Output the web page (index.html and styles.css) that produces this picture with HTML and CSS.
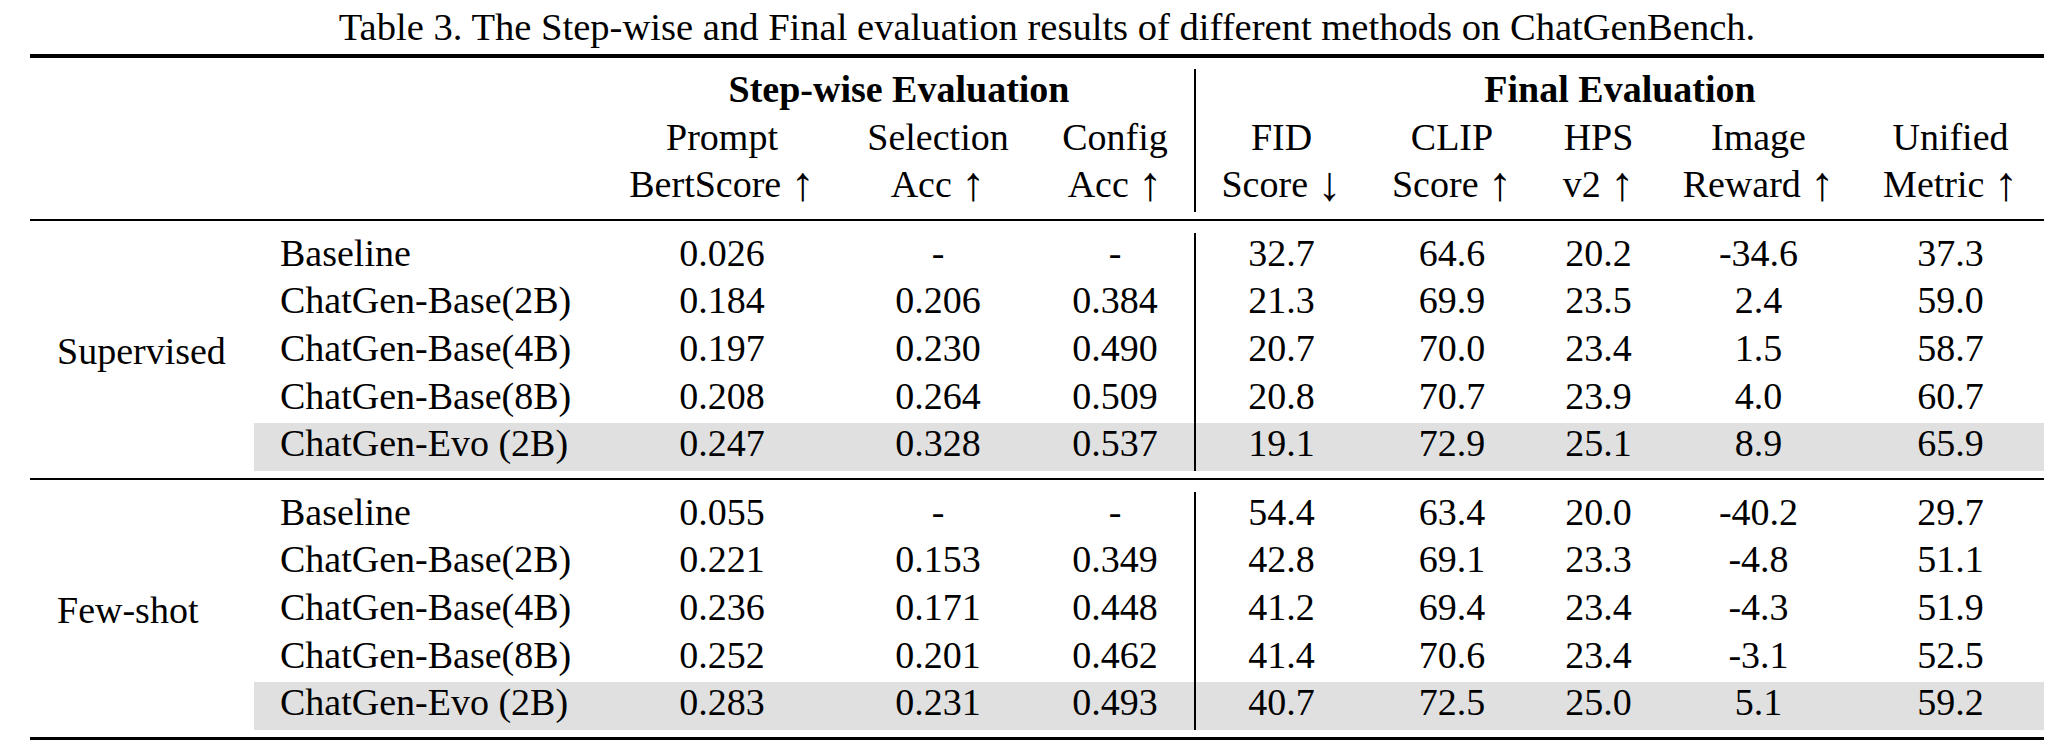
FILE: index.html
```html
<!DOCTYPE html>
<html>
<head>
<meta charset="utf-8">
<link rel="stylesheet" href="styles.css">
</head>
<body>
<div class="figure">
  <div class="caption">Table 3. The Step-wise and Final evaluation results of different methods on ChatGenBench.</div>
  <table class="results">
    <colgroup>
      <col class="c-group"><col class="c-method"><col class="c-prompt"><col class="c-sel"><col class="c-cfg">
      <col class="c-fid"><col class="c-clip"><col class="c-hps"><col class="c-ir"><col class="c-um">
    </colgroup>
    <tbody>
      <tr class="rule rule-top"><td colspan="10"><div class="line thick"></div></td></tr>
      <tr class="head">
        <td></td><td></td>
        <td colspan="3" class="bold">Step-wise Evaluation</td>
        <td colspan="5" class="bold vl">Final Evaluation</td>
      </tr>
      <tr class="head">
        <td></td><td></td>
        <td>Prompt</td><td>Selection</td><td>Config</td>
        <td class="vl">FID</td><td>CLIP</td><td>HPS</td><td>Image</td><td>Unified</td>
      </tr>
      <tr class="head">
        <td></td><td></td>
        <td>BertScore <span class="arr">↑</span></td><td>Acc <span class="arr">↑</span></td><td>Acc <span class="arr">↑</span></td>
        <td class="vl">Score <span class="arr">↓</span></td><td>Score <span class="arr">↑</span></td><td>v2 <span class="arr">↑</span></td><td>Reward <span class="arr">↑</span></td><td>Metric <span class="arr">↑</span></td>
      </tr>
      <tr class="rule rule-mid"><td colspan="10"><div class="line thin"></div></td></tr>

      <tr><td class="group" rowspan="5">Supervised</td><td class="method">Baseline</td><td>0.026</td><td>-</td><td>-</td><td class="vl">32.7</td><td>64.6</td><td>20.2</td><td>-34.6</td><td>37.3</td></tr>
      <tr><td class="method">ChatGen-Base(2B)</td><td>0.184</td><td>0.206</td><td>0.384</td><td class="vl">21.3</td><td>69.9</td><td>23.5</td><td>2.4</td><td>59.0</td></tr>
      <tr><td class="method">ChatGen-Base(4B)</td><td>0.197</td><td>0.230</td><td>0.490</td><td class="vl">20.7</td><td>70.0</td><td>23.4</td><td>1.5</td><td>58.7</td></tr>
      <tr><td class="method">ChatGen-Base(8B)</td><td>0.208</td><td>0.264</td><td>0.509</td><td class="vl">20.8</td><td>70.7</td><td>23.9</td><td>4.0</td><td>60.7</td></tr>
      <tr class="hl"><td class="method">ChatGen-Evo (2B)</td><td>0.247</td><td>0.328</td><td>0.537</td><td class="vl">19.1</td><td>72.9</td><td>25.1</td><td>8.9</td><td>65.9</td></tr>

      <tr class="rule rule-mid"><td colspan="10"><div class="line thin"></div></td></tr>

      <tr><td class="group" rowspan="5">Few-shot</td><td class="method">Baseline</td><td>0.055</td><td>-</td><td>-</td><td class="vl">54.4</td><td>63.4</td><td>20.0</td><td>-40.2</td><td>29.7</td></tr>
      <tr><td class="method">ChatGen-Base(2B)</td><td>0.221</td><td>0.153</td><td>0.349</td><td class="vl">42.8</td><td>69.1</td><td>23.3</td><td>-4.8</td><td>51.1</td></tr>
      <tr><td class="method">ChatGen-Base(4B)</td><td>0.236</td><td>0.171</td><td>0.448</td><td class="vl">41.2</td><td>69.4</td><td>23.4</td><td>-4.3</td><td>51.9</td></tr>
      <tr><td class="method">ChatGen-Base(8B)</td><td>0.252</td><td>0.201</td><td>0.462</td><td class="vl">41.4</td><td>70.6</td><td>23.4</td><td>-3.1</td><td>52.5</td></tr>
      <tr class="hl"><td class="method">ChatGen-Evo (2B)</td><td>0.283</td><td>0.231</td><td>0.493</td><td class="vl">40.7</td><td>72.5</td><td>25.0</td><td>5.1</td><td>59.2</td></tr>

      <tr class="rule rule-bottom"><td colspan="10"><div class="line thick"></div></td></tr>
    </tbody>
  </table>
</div>
</body>
</html>
```

FILE: styles.css
```css
html, body {
  margin: 0;
  padding: 0;
  background: #ffffff;
}

body {
  font-family: "Liberation Serif", "Times New Roman", serif;
  color: #000000;
  width: 2055px;
}

.figure {
  padding-left: 30px;
  width: 2014px;
}

.caption {
  font-size: 38.6px;
  line-height: 54px;
  text-align: center;
  padding-left: 20px;
  white-space: nowrap;
}

.results {
  width: 2014px;
  table-layout: fixed;
  border-collapse: separate;
  border-spacing: 0;
  font-size: 38px;
}

.c-group { width: 224px; }
.c-method { width: 350px; }
.c-prompt { width: 236px; }
.c-sel { width: 196px; }
.c-cfg { width: 158px; }
.c-fid { width: 173px; }
.c-clip { width: 170px; }
.c-hps { width: 123px; }
.c-ir { width: 197px; }
.c-um { width: 187px; }

.results td {
  padding: 0 0 6px 0;
  height: 41.6px;
  line-height: 41.6px;
  text-align: center;
  vertical-align: top;
  white-space: nowrap;
}

.results td.bold {
  font-weight: bold;
}

.results td.vl {
  border-left: 2px solid #000;
}

.results td.group {
  text-align: left;
  padding-left: 27px;
  vertical-align: middle;
  padding-bottom: 0;
}

.results td.method {
  text-align: left;
  padding-left: 26px;
}

.results tr.hl td {
  background: #e0e0e0;
}

.arr {
  font-size: 48px;
  line-height: 0;
  vertical-align: -3px;
}

.results tr.rule td {
  padding: 0;
  height: auto;
  line-height: 0;
  font-size: 0;
}

.results tr.rule-top td {
  padding-bottom: 11.5px;
}

.results tr.rule-mid td {
  padding-top: 7px;
  padding-bottom: 11.5px;
}

.results tr.rule-bottom td {
  padding-top: 7px;
}

.line {
  background: #000;
}

.line.thick {
  height: 3.5px;
}

.line.thin {
  height: 2.5px;
}
```
